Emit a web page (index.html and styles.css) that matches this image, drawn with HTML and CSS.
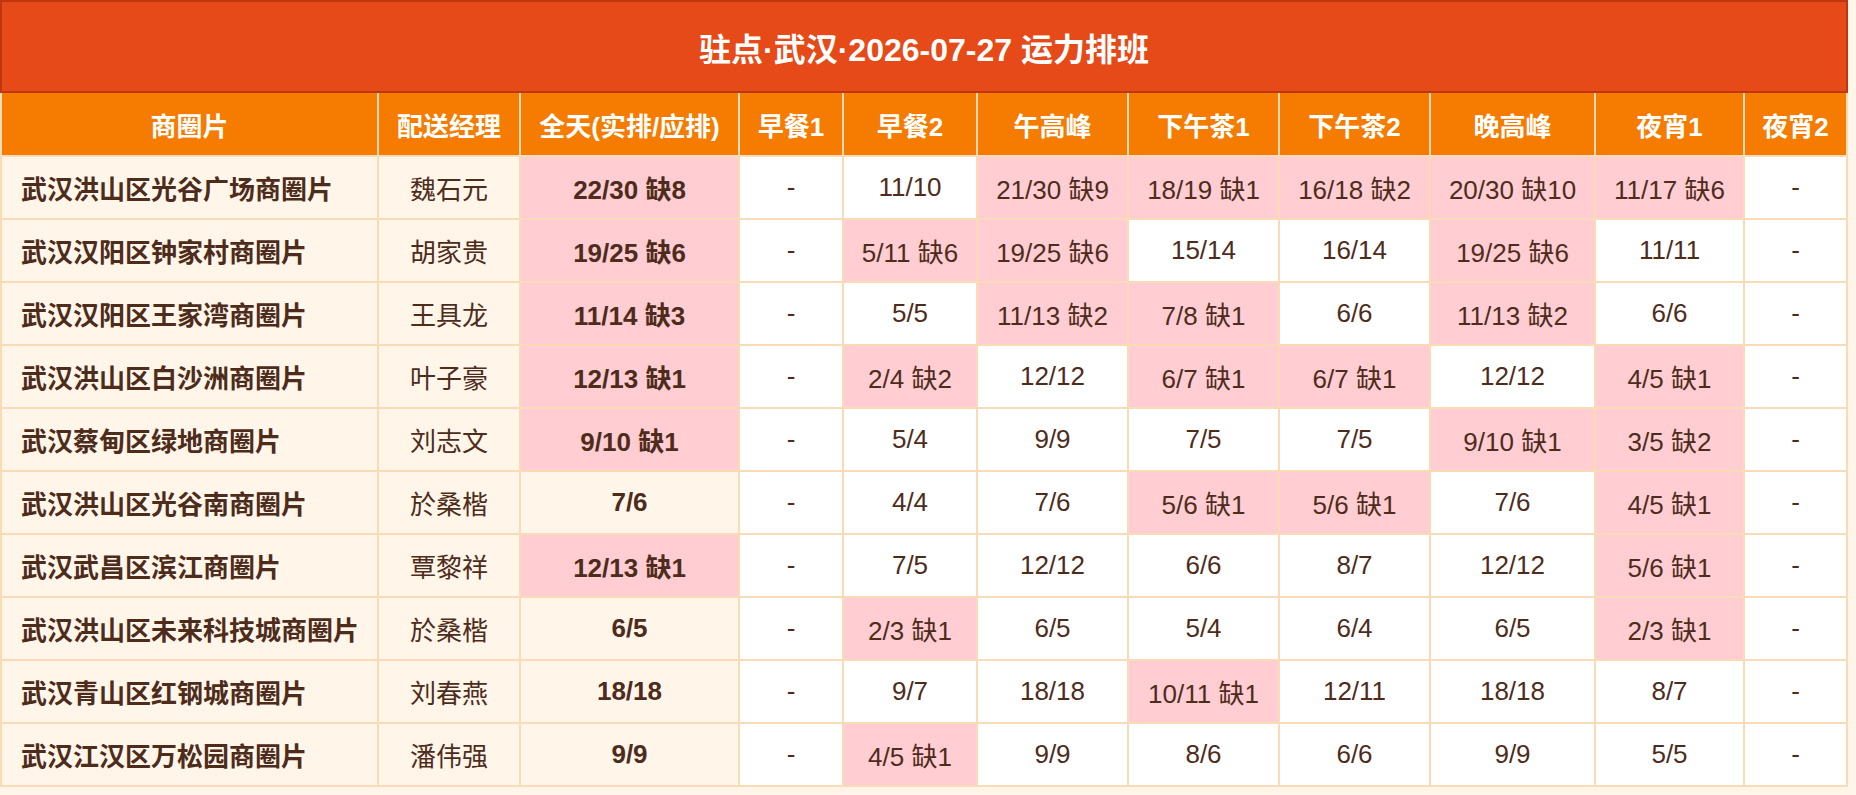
FILE: index.html
```html
<!DOCTYPE html>
<html lang="zh-CN">
<head>
<meta charset="utf-8">
<title>驻点·武汉·2026-07-27 运力排班</title>
<link rel="stylesheet" href="styles.css">
</head>
<body>
<div class="board">
  <div class="title">驻点·武汉·2026-07-27 运力排班</div>
  <div class="grid">
    <div class="th">商圈片</div>
    <div class="th">配送经理</div>
    <div class="th">全天(实排/应排)</div>
    <div class="th">早餐1</div>
    <div class="th">早餐2</div>
    <div class="th">午高峰</div>
    <div class="th">下午茶1</div>
    <div class="th">下午茶2</div>
    <div class="th">晚高峰</div>
    <div class="th">夜宵1</div>
    <div class="th">夜宵2</div>

    <div class="td area">武汉洪山区光谷广场商圈片</div>
    <div class="td mgr">魏石元</div>
    <div class="td total short">22/30 缺8</div>
    <div class="td">-</div>
    <div class="td">11/10</div>
    <div class="td short">21/30 缺9</div>
    <div class="td short">18/19 缺1</div>
    <div class="td short">16/18 缺2</div>
    <div class="td short">20/30 缺10</div>
    <div class="td short">11/17 缺6</div>
    <div class="td">-</div>

    <div class="td area">武汉汉阳区钟家村商圈片</div>
    <div class="td mgr">胡家贵</div>
    <div class="td total short">19/25 缺6</div>
    <div class="td">-</div>
    <div class="td short">5/11 缺6</div>
    <div class="td short">19/25 缺6</div>
    <div class="td">15/14</div>
    <div class="td">16/14</div>
    <div class="td short">19/25 缺6</div>
    <div class="td">11/11</div>
    <div class="td">-</div>

    <div class="td area">武汉汉阳区王家湾商圈片</div>
    <div class="td mgr">王具龙</div>
    <div class="td total short">11/14 缺3</div>
    <div class="td">-</div>
    <div class="td">5/5</div>
    <div class="td short">11/13 缺2</div>
    <div class="td short">7/8 缺1</div>
    <div class="td">6/6</div>
    <div class="td short">11/13 缺2</div>
    <div class="td">6/6</div>
    <div class="td">-</div>

    <div class="td area">武汉洪山区白沙洲商圈片</div>
    <div class="td mgr">叶子豪</div>
    <div class="td total short">12/13 缺1</div>
    <div class="td">-</div>
    <div class="td short">2/4 缺2</div>
    <div class="td">12/12</div>
    <div class="td short">6/7 缺1</div>
    <div class="td short">6/7 缺1</div>
    <div class="td">12/12</div>
    <div class="td short">4/5 缺1</div>
    <div class="td">-</div>

    <div class="td area">武汉蔡甸区绿地商圈片</div>
    <div class="td mgr">刘志文</div>
    <div class="td total short">9/10 缺1</div>
    <div class="td">-</div>
    <div class="td">5/4</div>
    <div class="td">9/9</div>
    <div class="td">7/5</div>
    <div class="td">7/5</div>
    <div class="td short">9/10 缺1</div>
    <div class="td short">3/5 缺2</div>
    <div class="td">-</div>

    <div class="td area">武汉洪山区光谷南商圈片</div>
    <div class="td mgr">於桑楷</div>
    <div class="td total">7/6</div>
    <div class="td">-</div>
    <div class="td">4/4</div>
    <div class="td">7/6</div>
    <div class="td short">5/6 缺1</div>
    <div class="td short">5/6 缺1</div>
    <div class="td">7/6</div>
    <div class="td short">4/5 缺1</div>
    <div class="td">-</div>

    <div class="td area">武汉武昌区滨江商圈片</div>
    <div class="td mgr">覃黎祥</div>
    <div class="td total short">12/13 缺1</div>
    <div class="td">-</div>
    <div class="td">7/5</div>
    <div class="td">12/12</div>
    <div class="td">6/6</div>
    <div class="td">8/7</div>
    <div class="td">12/12</div>
    <div class="td short">5/6 缺1</div>
    <div class="td">-</div>

    <div class="td area">武汉洪山区未来科技城商圈片</div>
    <div class="td mgr">於桑楷</div>
    <div class="td total">6/5</div>
    <div class="td">-</div>
    <div class="td short">2/3 缺1</div>
    <div class="td">6/5</div>
    <div class="td">5/4</div>
    <div class="td">6/4</div>
    <div class="td">6/5</div>
    <div class="td short">2/3 缺1</div>
    <div class="td">-</div>

    <div class="td area">武汉青山区红钢城商圈片</div>
    <div class="td mgr">刘春燕</div>
    <div class="td total">18/18</div>
    <div class="td">-</div>
    <div class="td">9/7</div>
    <div class="td">18/18</div>
    <div class="td short">10/11 缺1</div>
    <div class="td">12/11</div>
    <div class="td">18/18</div>
    <div class="td">8/7</div>
    <div class="td">-</div>

    <div class="td area">武汉江汉区万松园商圈片</div>
    <div class="td mgr">潘伟强</div>
    <div class="td total">9/9</div>
    <div class="td">-</div>
    <div class="td short">4/5 缺1</div>
    <div class="td">9/9</div>
    <div class="td">8/6</div>
    <div class="td">6/6</div>
    <div class="td">9/9</div>
    <div class="td">5/5</div>
    <div class="td">-</div>
  </div>
</div>
</body>
</html>
```

FILE: styles.css
```css
html, body {
  margin: 0;
  padding: 0;
}

body {
  background: #fff5e8;
  font-family: "Liberation Sans", "Noto Sans CJK SC", sans-serif;
  color: #4e2c1c;
}

.board {
  width: 1848px;
}

.title {
  box-sizing: border-box;
  height: 93px;
  border: 2px solid #c0360f;
  background: #e64a19;
  color: #ffffff;
  font-size: 32px;
  font-weight: bold;
  display: flex;
  align-items: center;
  justify-content: center;
}

.grid {
  display: grid;
  grid-template-columns: 375px 140px 217px 102px 132px 149px 149px 149px 163px 147px 101px;
  grid-template-rows: 62px;
  grid-auto-rows: 61px;
  gap: 2px;
  padding: 0 2px 2px 2px;
  background: #f9dbb8;
}

.th {
  background: #f57c00;
  color: #ffffff;
  font-size: 26px;
  font-weight: bold;
  display: flex;
  align-items: center;
  justify-content: center;
  white-space: nowrap;
}

.td {
  background: #ffffff;
  font-size: 26px;
  display: flex;
  align-items: center;
  justify-content: center;
  white-space: nowrap;
}

.td.area {
  background: #fff5e8;
  font-weight: bold;
  justify-content: flex-start;
  padding-left: 19px;
}

.td.mgr {
  background: #fff5e8;
}

.td.total {
  background: #fff5e8;
  font-weight: bold;
}

.td.short {
  background: #ffcdd2;
}
```
